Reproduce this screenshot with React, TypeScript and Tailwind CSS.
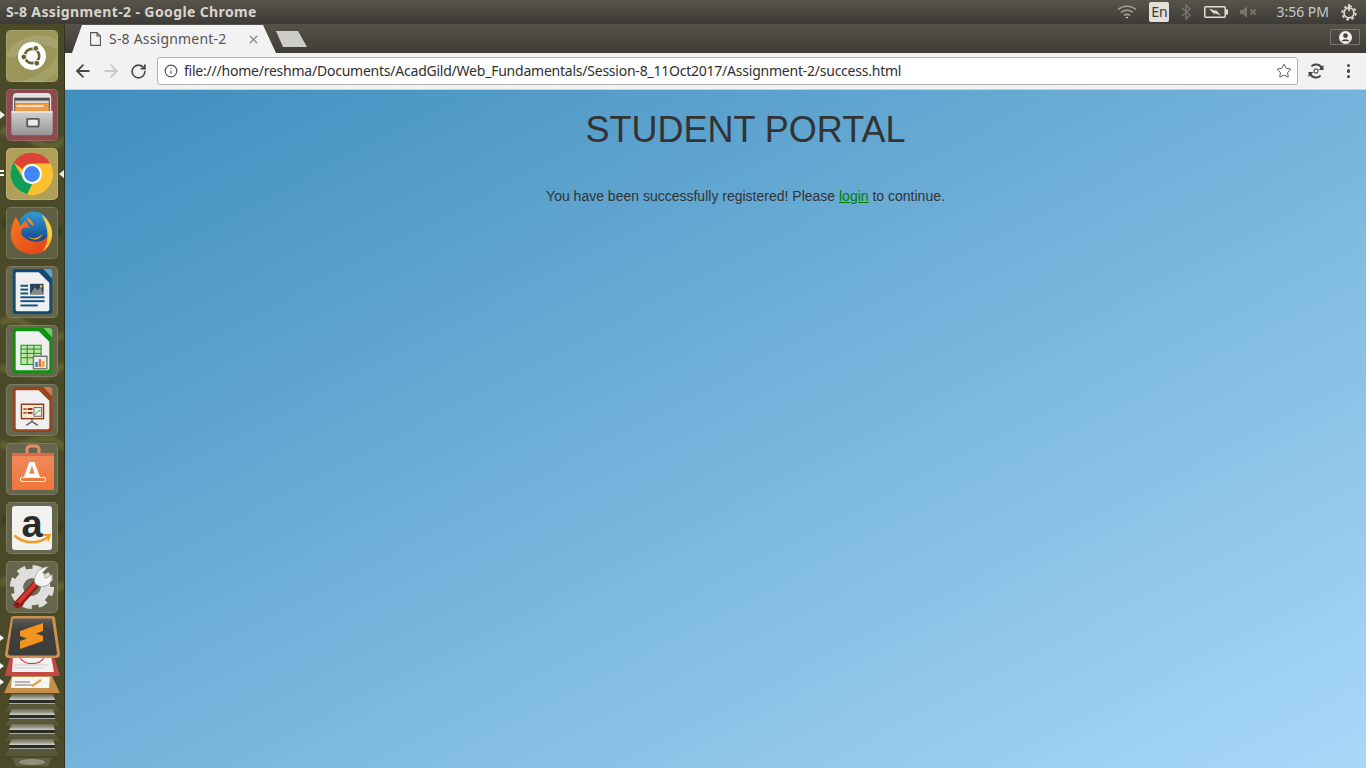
import React from "react";
import { ArrowLeft, ArrowRight, RotateCw, Star, Info, X } from "lucide-react";

function Tile({ bg, children, arrowL, arrowR, doubleL }: { bg: string; children: React.ReactNode; arrowL?: boolean; arrowR?: boolean; doubleL?: boolean }) {
  return (
    <div className="relative flex h-[52px] w-[64px] shrink-0 justify-center">
      <div className={`flex h-[52px] w-[52px] items-center justify-center rounded-[5px] border border-white/15 ${bg}`}>{children}</div>
      {arrowL && <div className="absolute left-0 top-[22px] h-0 w-0 border-y-[4px] border-l-[5px] border-y-transparent border-l-white/90" />}
      {doubleL && <div className="absolute left-0 top-[22px] h-[2px] w-[4px] bg-white shadow-[0_4px_0_#fff]" />}
      {arrowR && <div className="absolute right-0 top-[22px] h-0 w-0 border-y-[4px] border-r-[5px] border-y-transparent border-r-white/90" />}
    </div>
  );
}

const ubuntu = (
  <svg viewBox="0 0 52 52" className="h-[52px] w-[52px]">
    <path d="M-2 26C8 6 34 -2 54 10V22C40 10 20 10 8 28Z" fill="#fff" fillOpacity=".12" />
    <path d="M10 54C24 50 42 44 54 24V42C46 50 36 54 28 54Z" fill="#fff" fillOpacity=".1" />
    <circle cx="26" cy="26" r="14.500" fill="#fff" />
    <circle cx="26" cy="26" r="7.500" fill="none" stroke="#6a6530" strokeWidth="2.800" />
    <circle cx="17.500" cy="27" r="3" fill="#6a6530" stroke="#fff" strokeWidth="1" />
    <circle cx="30" cy="18" r="3" fill="#6a6530" stroke="#fff" strokeWidth="1" />
    <circle cx="31" cy="33.500" r="3" fill="#6a6530" stroke="#fff" strokeWidth="1" />
  </svg>
);

const files = (
  <svg viewBox="0 0 52 52" className="h-[52px] w-[52px]">
    <defs>
      <linearGradient id="fcab" x1="0" y1="0" x2="0" y2="1"><stop offset="0" stopColor="#d2d2d2" /><stop offset="1" stopColor="#959595" /></linearGradient>
    </defs>
    <path d="M6 8Q6 3 10 3H42Q46 3 46 8V22H6Z" fill="#e2e2e2" />
    <rect x="7.500" y="8" width="37" height="16" fill="#4e4a46" />
    <rect x="8.500" y="11" width="35" height="3" fill="#d8d4cc" />
    <rect x="8.500" y="14" width="35" height="8" fill="#ee9b48" />
    <rect x="10" y="16" width="28" height="1.500" fill="#fff" fillOpacity=".85" />
    <path d="M4.500 22H47.500V44Q47.500 47 45 47H7Q4.500 47 4.500 44Z" fill="url(#fcab)" />
    <rect x="4.500" y="22" width="43" height="1.500" fill="#eee" />
    <rect x="20" y="29" width="14" height="10" rx="1.500" fill="#5e5e5e" />
    <rect x="22" y="31" width="10" height="6" fill="#ececec" />
  </svg>
);

const chrome = (
  <svg viewBox="0 0 52 52" className="h-[52px] w-[52px]">
    <circle cx="26" cy="26" r="22" fill="#fbc02d" />
    <path d="M26 4A22 22 0 0 1 45 15H26A11 11 0 0 0 16 21L7 14A22 22 0 0 1 26 4Z" fill="#db4437" />
    <path d="M7 14L17 31L26 37L21 47A22 22 0 0 1 7 14Z" fill="#0f9d58" />
    <circle cx="26" cy="26" r="10.500" fill="#fff" />
    <circle cx="26" cy="26" r="8.200" fill="#4285f4" />
  </svg>
);

const firefox = (
  <svg viewBox="0 0 52 52" className="h-[52px] w-[52px]">
    <defs>
      <linearGradient id="ffg" x1="0" y1="0" x2="0" y2="1"><stop offset="0" stopColor="#2f9cd6" /><stop offset="1" stopColor="#143f86" /></linearGradient>
      <linearGradient id="ffo" x1="0" y1="0" x2="1" y2="1"><stop offset="0" stopColor="#f57a1f" /><stop offset="1" stopColor="#df3e1c" /></linearGradient>
    </defs>
    <circle cx="28" cy="21" r="17" fill="url(#ffg)" />
    <path d="M9 9C7 14 4 20 4 28C4 40 15 48 27 48C39 48 47 39 47 28C47 25 46 22 45 20C45 28 40 35 31 35C25 35 20 33 17 30C14 27 14 23 17 21C19 20 22 20 24 21C22 18 21 15 19 13C17 15 15 17 14 19C13 15 11 12 9 9Z" fill="url(#ffo)" />
    <path d="M21 10C25 12 27 15 28 19C24 17 21 14 21 10Z" fill="#f38a22" />
    <path d="M22 30C28 33 33 31 37 27C35 33 27 35 22 30Z" fill="#f6a52a" />
    <path d="M36 7C45 13 49 23 46 33C44 39 41 43 37 45C43 37 45 24 36 7Z" fill="#fcc52f" />
    <path d="M38 9C44 15 47 24 45 32C44 24 42 16 38 9Z" fill="#f7dc4a" />
  </svg>
);

function Doc({ edge, corner, children }: { edge: string; corner: string; children: React.ReactNode }) {
  return (
    <svg viewBox="0 0 52 52" className="h-[52px] w-[52px]">
      <path d="M9 2H38L47 12V46Q47 49 44 49H9Q6 49 6 46V5Q6 2 9 2Z" fill={edge} />
      <path d="M38 2H44Q47 2 47 5V12Z" fill={corner} />
      <path d="M10 5.500H33L44 16.500V44Q44 46 42 46H10.500Q9 46 9 44.500V6.500Q9 5.500 10 5.500Z" fill="#efefef" />
      {children}
    </svg>
  );
}

const writer = (
  <Doc edge="#0d4c78" corner="#5fa2cc">
    <g fill="#15517f">
      <rect x="14" y="18.500" width="8" height="2" /><rect x="14" y="22.500" width="8" height="2" /><rect x="14" y="26.500" width="8" height="2" />
      <rect x="14" y="30.500" width="25" height="2" /><rect x="14" y="34.500" width="25" height="2" /><rect x="14" y="39" width="18" height="2" />
    </g>
    <rect x="24" y="17.500" width="14" height="11" fill="#263f5c" />
    <path d="M24 28.500L29 21L32 24.500L35 20.500L38 28.500Z" fill="#8a8a80" />
    <circle cx="35.500" cy="20" r="1.400" fill="#f3c33b" />
  </Doc>
);

const calc = (
  <Doc edge="#119010" corner="#68cf64">
    <rect x="14.500" y="20" width="21" height="20" fill="#bfe7a7" stroke="#1a8a1a" />
    <path d="M14.500 24H35.500M14.500 28.500H35.500M14.500 33H35.500M21 20V40M28 20V40" stroke="#1a8a1a" />
    <rect x="27.500" y="31.500" width="14" height="13" fill="#eee" stroke="#777" strokeWidth="1.500" />
    <rect x="29.500" y="37.500" width="2.500" height="5" fill="#2d7fc1" /><rect x="33" y="34.500" width="2.500" height="8" fill="#e8642a" /><rect x="36.500" y="36.500" width="2.500" height="6" fill="#e8a12a" />
  </Doc>
);

const impress = (
  <Doc edge="#9c431b" corner="#d07a55">
    <rect x="15" y="20" width="23" height="15" fill="#fbe9d5" stroke="#8e3c16" strokeWidth="1.500" />
    <rect x="17" y="24" width="3.500" height="2" fill="#c2612d" /><rect x="17" y="28" width="3.500" height="2" fill="#c2612d" />
    <rect x="21.500" y="24" width="5" height="2" fill="#7b3413" /><rect x="21.500" y="28" width="5" height="2" fill="#7b3413" />
    <rect x="28" y="23.500" width="8" height="9" fill="#eee" stroke="#666" />
    <path d="M29 31L32 27.500L35 26" stroke="#3c9a2c" fill="none" />
    <path d="M26 35V38M26 38L20 42M26 38L32 42" stroke="#555" strokeWidth="1.300" fill="none" />
  </Doc>
);

const store = (
  <div className="relative h-[52px] w-[52px]">
    <svg viewBox="0 0 52 52" className="absolute inset-0 h-[52px] w-[52px]">
      <defs>
        <linearGradient id="sbag" x1="0" y1="0" x2="0" y2="1"><stop offset="0" stopColor="#ee8a5c" /><stop offset="1" stopColor="#f2753a" /></linearGradient>
      </defs>
      <path d="M20 13V6Q20 3 24 3H28Q32 3 32 6V13" fill="none" stroke="#e88a68" strokeWidth="3" />
      <path d="M5 11H47V46Q47 47 46 47H6Q5 47 5 46Z" fill="url(#sbag)" />
      <rect x="5" y="10" width="42" height="3" fill="#dd6a44" />
    </svg>
    <span className="absolute inset-x-0 top-[14px] text-center font-['Liberation_Sans',sans-serif] text-[29px] font-bold leading-[30px] text-white">A</span>
    <div className="absolute left-[13px] top-[34px] h-[5px] w-[26px] rounded-[2px] border border-white bg-[#f0773b]" />
  </div>
);

const amazon = (
  <div className="relative h-[44px] w-[40px] rounded-[3px] bg-[#f1f1ef]">
    <span className="absolute inset-x-0 top-[-3px] text-center font-['Liberation_Sans',sans-serif] text-[38px] font-bold leading-[42px] text-[#2a2a2a]">a</span>
    <svg viewBox="0 0 40 44" className="absolute inset-0 h-[44px] w-[40px]">
      <path d="M3 30C12 38 27 38 36 31" fill="none" stroke="#f39a1f" strokeWidth="2.500" strokeLinecap="round" />
      <path d="M31 29L38 29L36 35" fill="none" stroke="#f39a1f" strokeWidth="1.800" />
    </svg>
  </div>
);

const settings = (
  <svg viewBox="0 0 52 52" className="h-[52px] w-[52px]">
    <circle cx="26" cy="26" r="14" fill="none" stroke="#dededc" strokeWidth="10" />
    <circle cx="26" cy="26" r="20" fill="none" stroke="#dededc" strokeWidth="6" strokeDasharray="8.700 7" />
    <circle cx="26" cy="26" r="9" fill="#6d6d55" />
    <path d="M11 44L33 20" stroke="#8f1e1e" strokeWidth="8" strokeLinecap="round" />
    <path d="M11 43L32 20" stroke="#d8352f" strokeWidth="4" strokeLinecap="round" />
    <circle cx="11" cy="43.500" r="1.800" fill="#7a1414" />
    <path d="M29 22C27 13 34 5 43 5L37 11L40 17L47 13C48 22 41 27 33 25Z" fill="#f4f4f2" stroke="#9a9a94" strokeWidth=".8" />
  </svg>
);

const stack = (
  <svg viewBox="0 0 65 155" className="h-[155px] w-[65px] shrink-0">
    <defs>
      <linearGradient id="subl" x1="0" y1="0" x2="0" y2="1"><stop offset="0" stopColor="#5c5b59" /><stop offset=".3" stopColor="#40403e" /><stop offset="1" stopColor="#3c3c3a" /></linearGradient>
      <linearGradient id="bar" x1="0" y1="0" x2="0" y2="1"><stop offset="0" stopColor="#8f8f86" stopOpacity=".4" /><stop offset="1" stopColor="#d4d4ce" /></linearGradient>
    </defs>
    <path d="M10 40H54L60 60H5Z" fill="#c24a42" />
    <path d="M13 40H51L54 56H12Z" fill="#f1f1f1" />
    <path d="M20 42C25 49 38 50 44 42" fill="none" stroke="#d33" strokeWidth="1.200" />
    <path d="M14 49H48M14 52H44" stroke="#ccc" />
    <path d="M12 60H52L60 77H4Z" fill="#c6904c" />
    <path d="M12 61H50L49 72H11Z" fill="#f5f5f2" />
    <path d="M15 66H30M15 69H34" stroke="#777" />
    <path d="M32 70L41 64" stroke="#e8a33d" strokeWidth="2.500" />
    <path d="M11 2Q11 0 14 0H52Q55 0 55 2L60 38Q60 42 56 42H9Q5 42 5 38Z" fill="#c8914f" />
    <path d="M13 2.500H52L57 37Q57 39.500 55 39.500H10Q8 39.500 8 37Z" fill="url(#subl)" />
    <polygon points="20,15 43,7 43,15 36,17.500 43,20 43,25 20,33 20,25 27,22.500 20,20" fill="#f4941f" />
    {[81, 96, 111, 126].map((y) => (
      <g key={y}>
        <path d={`M11 ${y + 4}H54L59 ${y + 14}H5Z`} fill="#fff" fillOpacity=".08" />
        <path d={`M12 ${y - 3}H53L55 ${y + 3}H9Z`} fill="url(#bar)" />
        <rect x="9" y={y + 3} width="46" height="3" fill="#2b2b28" />
        <rect x="9" y={y + 6} width="46" height="1" fill="#a9a9a4" />
      </g>
    ))}
    <path d="M12 142H52L48 150H16Z" fill="#fff" fillOpacity=".12" />
    <ellipse cx="32" cy="146" rx="13" ry="3" fill="#d6d6d0" fillOpacity=".4" />
    <path d="M0 19l4 3-4 3ZM0 47l4 3-4 3ZM0 63l4 3-4 3Z" fill="#fff" />
  </svg>
);

function Dock() {
  return (
    <aside className="relative flex w-[65px] shrink-0 flex-col overflow-hidden border-r border-black/30 bg-[#4a4a28] pt-[6px]">
      <svg viewBox="0 0 65 744" preserveAspectRatio="none" className="absolute inset-0 h-full w-full opacity-60 blur-[2px]">
        <path d="M0 110C20 90 40 140 65 115M0 300C25 280 40 330 65 310M0 345C25 340 40 365 65 340M0 420C20 430 50 400 65 425M0 560C25 540 40 580 65 560" stroke="#7c7c3c" strokeWidth="6" fill="none" />
        <path d="M0 200C25 190 40 220 65 205M0 500C20 480 40 520 65 500" stroke="#33361c" strokeWidth="9" fill="none" />
      </svg>
      <div className="relative flex flex-col gap-[7px]">
        <Tile bg="bg-[#999658]">{ubuntu}</Tile>
        <Tile bg="bg-[#8e4a4e]" arrowL>{files}</Tile>
        <Tile bg="bg-[#b09f58]" doubleL arrowR>{chrome}</Tile>
        <Tile bg="bg-[#5f5f44]">{firefox}</Tile>
        <Tile bg="bg-[#66664c]">{writer}</Tile>
        <Tile bg="bg-[#66664c]">{calc}</Tile>
        <Tile bg="bg-[#66664c]">{impress}</Tile>
        <Tile bg="bg-[#66664c]">{store}</Tile>
        <Tile bg="bg-[#66664c]">{amazon}</Tile>
        <Tile bg="bg-[#66664c]">{settings}</Tile>
        <div className="-mt-[4px]">{stack}</div>
      </div>
    </aside>
  );
}

function TopBar() {
  return (
    <header className="flex h-6 shrink-0 items-center justify-between bg-gradient-to-b from-[#57544b] to-[#3d3b37] pl-[6px] pr-[8px]">
      <span className="font-['Noto_Sans',sans-serif] text-[14px] font-bold leading-6 tracking-[0.38px] text-[#d8d4cc]">S-8 Assignment-2 - Google Chrome</span>
      <div className="flex items-center">
        <svg viewBox="0 0 20 14" className="h-[14px] w-[20px]" fill="none" stroke="#a5a29b" strokeWidth="1.500">
          <path d="M1 4.500C6 0 14 0 19 4.500" /><path d="M4 7.500C7.500 4.500 12.500 4.500 16 7.500" /><path d="M7 10.500C9 9 11 9 13 10.500" />
          <path d="M8.500 12.500L10 11.500L11.500 12.500L10 13.500Z" fill="#c8c5be" stroke="none" />
        </svg>
        <span className="ml-[12px] flex h-5 w-5 items-center justify-center rounded-[2px] bg-[#e3e0da] font-['Noto_Sans',sans-serif] text-[14px] leading-none text-[#3a3835]">En</span>
        <svg viewBox="0 0 10 16" className="ml-[12px] h-[16px] w-[10px]" fill="none" stroke="#77756e" strokeWidth="1.400">
          <path d="M1 4L9 11L5 15V1L9 5L1 12" />
        </svg>
        <svg viewBox="0 0 24 12" className="ml-[13px] h-[12px] w-[24px]">
          <rect x=".75" y=".75" width="20.500" height="10.500" rx="1" fill="none" stroke="#e0ddd6" strokeWidth="1.500" />
          <rect x="22" y="3.500" width="2" height="5" fill="#e0ddd6" />
          <path d="M5 2.500L12 5L11.200 3.200L17 9.500L10 7L10.800 9Z" fill="#e0ddd6" />
        </svg>
        <svg viewBox="0 0 17 12" className="ml-[12px] h-[12px] w-[17px]" fill="#77756e">
          <path d="M0 4H3L7 0V12L3 8H0Z" />
          <path d="M10.500 3.500L15.500 8.500M15.500 3.500L10.500 8.500" stroke="#77756e" strokeWidth="1.800" />
        </svg>
        <span className="ml-[19px] font-['Noto_Sans',sans-serif] text-[14px] leading-6 text-[#c5c8cd]">3:56 PM</span>
        <svg viewBox="0 0 20 20" className="ml-[11px] h-[18px] w-[18px]" fill="none" stroke="#dcd9d2">
          <circle cx="10" cy="11" r="5.500" strokeWidth="2" />
          <circle cx="10" cy="11" r="7.500" strokeWidth="2" strokeDasharray="3 2.900" />
          <path d="M10 1V9" strokeWidth="2" />
        </svg>
      </div>
    </header>
  );
}

function TabStrip() {
  return (
    <div className="flex h-[29px] shrink-0 items-end bg-gradient-to-b from-[#55524a] to-[#3f3d38] pl-[7px] pr-[6px]">
      <div className="flex h-[28px] w-[204px] items-center bg-[#f2f2f2] pl-[18px] pr-[16px] [clip-path:polygon(10px_0,191px_0,204px_100%,0_100%)]">
        <svg viewBox="0 0 11 14" className="h-[14px] w-[11px]" fill="none" stroke="#55534f" strokeWidth="1.100">
          <path d="M.6 .6H7L10.400 4V13.400H.6Z" /><path d="M7 .6V4H10.400" />
        </svg>
        <span className="ml-[8px] font-['Noto_Sans',sans-serif] text-[14px] leading-none tracking-[0.2px] text-[#555]">S-8 Assignment-2</span>
        <X size={13} strokeWidth={2.500} className="ml-auto text-[#8c8c8c]" />
      </div>
      <div className="ml-[-2px] mb-[6px] h-[16px] w-[33px] bg-[#cfcdc8] [clip-path:polygon(2px_0,24px_0,33px_100%,9px_100%)]" />
      <div className="mb-[3px] ml-auto flex h-[16px] w-[30px] -translate-y-[5px] items-center justify-center rounded-[1px] border border-[#77756e]">
        <svg viewBox="0 0 14 14" className="h-[13px] w-[13px]">
          <circle cx="7" cy="7" r="7" fill="#f2f2f2" />
          <circle cx="7" cy="5" r="2.500" fill="#45433e" />
          <path d="M2.500 11C4 8 10 8 11.500 11Z" fill="#45433e" />
        </svg>
      </div>
    </div>
  );
}

function Toolbar() {
  return (
    <div className="flex h-[37px] shrink-0 items-center border-b border-[#d0d0d0] bg-[#f2f2f2] pl-[8px] pr-[16px]">
      <ArrowLeft size={20} strokeWidth={2.200} className="text-[#4a4a4a]" />
      <ArrowRight size={20} strokeWidth={2.200} className="ml-[8px] text-[#c9c9c9]" />
      <RotateCw size={17} strokeWidth={2.400} className="ml-[9px] text-[#4a4a4a]" />
      <div className="ml-[10px] flex h-[28px] flex-1 items-center rounded-[3px] border border-[#b5b5b5] bg-white pl-[6px] pr-[5px]">
        <Info size={14} strokeWidth={2} className="text-[#555]" />
        <span className="ml-[6px] font-['Noto_Sans',sans-serif] text-[14px] leading-none tracking-[-0.23px] text-[#303030]">file:///home/reshma/Documents/AcadGild/Web_Fundamentals/Session-8_11Oct2017/Assignment-2/success.html</span>
        <Star size={16} strokeWidth={1.500} className="ml-auto text-[#555]" />
      </div>
      <svg viewBox="0 0 16 16" className="ml-[10px] h-[16px] w-[16px]" fill="none" stroke="#444" strokeWidth="2">
        <path d="M3.400 3.400A6.500 6.500 0 0 1 13.800 5" />
        <path d="M12.600 12.600A6.500 6.500 0 0 1 2.200 11" />
        <path d="M15.500 2V7H10.500ZM.5 14V9H5.500Z" fill="#444" stroke="none" />
        <circle cx="8" cy="8" r="2" strokeWidth="1.300" stroke="#666" />
      </svg>
      <div className="ml-[23px] flex flex-col gap-[2px]">
        <span className="h-[3.500px] w-[3.500px] rounded-full bg-[#444]" />
        <span className="h-[3.500px] w-[3.500px] rounded-full bg-[#444]" />
        <span className="h-[3.500px] w-[3.500px] rounded-full bg-[#444]" />
      </div>
    </div>
  );
}

export default function App() {
  return (
    <div className="flex h-[768px] w-[1366px] flex-col overflow-hidden">
      <TopBar />
      <div className="flex min-h-0 flex-1">
        <Dock />
        <div className="flex min-w-0 flex-1 flex-col">
          <TabStrip />
          <Toolbar />
          <main className="flex-1 bg-[linear-gradient(to_bottom_right,#3f8ebe,#a9d8f8)] pl-[60px] text-center font-['Liberation_Sans',sans-serif] text-[#333]">
            <h1 className="mt-[18px] text-[36px] font-normal leading-[44px]">STUDENT PORTAL</h1>
            <p className="mt-[34px] text-[14px] leading-5">
              You have been successfully registered! Please <a className="text-[#008000] underline">login</a> to continue.
            </p>
          </main>
        </div>
      </div>
    </div>
  );
}
